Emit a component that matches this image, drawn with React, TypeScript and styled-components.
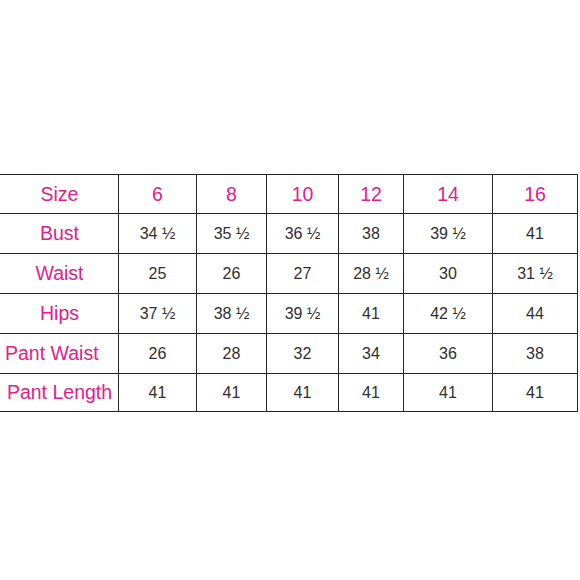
import styled, { createGlobalStyle } from "styled-components";

const GlobalStyle = createGlobalStyle`
	body {
		margin: 0;
		background: #ffffff;
		font-family: "Liberation Sans", Arial, sans-serif;
	}
`;

const sizes = ["6", "8", "10", "12", "14", "16"];

const rows = [
	{ label: "Bust", values: ["34 ½", "35 ½", "36 ½", "38", "39 ½", "41"] },
	{ label: "Waist", values: ["25", "26", "27", "28 ½", "30", "31 ½"] },
	{ label: "Hips", values: ["37 ½", "38 ½", "39 ½", "41", "42 ½", "44"] },
	{ label: "Pant Waist", values: ["26", "28", "32", "34", "36", "38"], left: true },
	{ label: "Pant Length", values: ["41", "41", "41", "41", "41", "41"] },
];

const colWidths = [119, 78, 70, 72, 65, 89, 85];

const App = () => {
	return (
		<Page>
			<GlobalStyle />
			<Chart>
				<colgroup>
					{colWidths.map((w, i) => (
						<col key={i} style={{ width: w }} />
					))}
				</colgroup>
				<tbody>
					<Row h={39}>
						<Label>Size</Label>
						{sizes.map((s) => (
							<Head key={s}>{s}</Head>
						))}
					</Row>
					{rows.map((r, idx) => (
						<Row key={r.label} h={idx === rows.length - 1 ? 38 : 40}>
							<Label left={r.left}>{r.label}</Label>
							{r.values.map((v, i) => (
								<Cell key={i}>{v}</Cell>
							))}
						</Row>
					))}
				</tbody>
			</Chart>
		</Page>
	);
};

const Page = styled.div`
	width: 580px;
	height: 580px;
	padding-top: 174px;
	box-sizing: border-box;
	overflow: hidden;
`;

const Chart = styled.table`
	border-collapse: collapse;
	table-layout: fixed;
	width: 579px;
	margin-left: -1px;
`;

const Row = styled.tr<{ h: number }>`
	height: ${(props) => props.h}px;
`;

const Base = styled.td`
	border: 1px solid #262626;
	padding: 0;
	text-align: center;
	vertical-align: middle;
	white-space: nowrap;
`;

const Label = styled(Base)<{ left?: boolean }>`
	color: #e2208a;
	font-size: 19.5px;
	text-align: ${(props) => (props.left ? "left" : "center")};
	padding-left: ${(props) => (props.left ? "5px" : "1px")};
`;

const Head = styled(Base)`
	color: #e2208a;
	font-size: 19.5px;
`;

const Cell = styled(Base)`
	color: #2f2f2f;
	font-size: 16px;
`;

export default App;
